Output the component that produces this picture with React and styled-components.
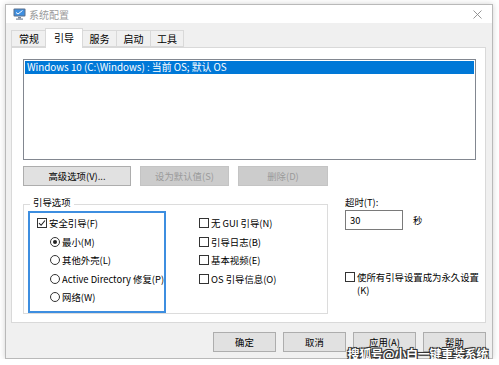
import React from "react";
import styled, { createGlobalStyle } from "styled-components";

const Global = createGlobalStyle`
  html, body { margin: 0; padding: 0; background: #ffffff; }
  body { font-family: "Noto Sans CJK SC", "Noto Sans", sans-serif; font-size: 9.4px; color: #000; }
  * { box-sizing: border-box; }
`;

const Window = styled.div`
  position: relative;
  margin: 4px 0 0 5px;
  width: 488px;
  height: 355px;
  border: 1px solid #b9b9b9;
  background: #f0f0f0;
  box-shadow: 0 0 6px rgba(0, 0, 0, 0.18);
  display: flex;
  flex-direction: column;
`;

const TitleBar = styled.div`
  height: 18px;
  background: #ffffff;
  display: flex;
  align-items: center;
  padding: 0 10px 0 7px;
  gap: 3px;
`;

const Title = styled.span`
  color: #9a9a9a;
  font-size: 10px;
  flex: 1;
`;

const Body = styled.div`
  flex: 1;
  display: flex;
  flex-direction: column;
  padding: 5px 6px 5px 5px;
`;

const TabRow = styled.div`
  height: 19px;
  display: flex;
  align-items: flex-end;
`;

const Tab = styled.div`
  width: ${(p) => p.$w}px;
  height: ${(p) => (p.$active ? 20 : 17)}px;
  margin: ${(p) => (p.$active ? "0 -1px -1px -1px" : "0")};
  position: relative;
  z-index: ${(p) => (p.$active ? 1 : 0)};
  background: ${(p) => (p.$active ? "#ffffff" : "#f0f0f0")};
  border: 1px solid #d9d9d9;
  border-bottom: ${(p) => (p.$active ? "none" : "1px solid #d9d9d9")};
  border-right: ${(p) => (p.$last || p.$active ? "1px solid #d9d9d9" : "none")};
  display: flex;
  align-items: center;
  justify-content: center;
  padding-bottom: ${(p) => (p.$active ? 3 : 0)}px;
  font-size: 10px;
`;

const Panel = styled.div`
  height: 276px;
  background: #ffffff;
  border: 1px solid #d9d9d9;
  padding: 11px 9px 0 11px;
  display: flex;
  flex-direction: column;
`;

const ListBox = styled.div`
  height: 101px;
  border: 1px solid #828790;
  padding: 1px;
`;

const ListItem = styled.div`
  height: 13px;
  background: #0078d7;
  color: #ffffff;
  padding-left: 2px;
  line-height: 13px;
  white-space: nowrap;
  font-size: 9.8px;
`;

const ButtonRow = styled.div`
  display: flex;
  gap: 9px;
  margin-top: 6px;
`;

const Button = styled.div`
  width: ${(p) => p.$w}px;
  height: 20px;
  flex: none;
  display: flex;
  align-items: center;
  justify-content: center;
  background: ${(p) => (p.$disabled ? "#cccccc" : "#e1e1e1")};
  border: 1px solid ${(p) => (p.$disabled ? "#c4c4c4" : "#adadad")};
  color: ${(p) => (p.$disabled ? "#9a9a9a" : "#000")};
  white-space: nowrap;
`;

const Lower = styled.div`
  display: flex;
  margin-top: 10px;
  gap: 17px;
`;

const Group = styled.fieldset`
  flex: none;
  width: 305px;
  min-width: 305px;
  margin: 0;
  padding: 0 0 0 4px;
  border: 1px solid #dcdcdc;
  display: flex;
  gap: 33px;
`;

const Legend = styled.legend`
  margin-left: 2px;
  padding: 0 3px 4px 3px;
  line-height: 12px;
`;

const Highlight = styled.div`
  width: 138px;
  height: 102px;
  margin-top: -1px;
  border: 2px solid #3d8ee0;
  padding: 1px 0 0 7px;
`;

const Column = styled.div`
  padding-top: 2px;
`;

const Row = styled.div`
  height: 18.5px;
  display: flex;
  align-items: center;
  gap: 2px;
  padding-left: ${(p) => p.$indent || 0}px;
  white-space: nowrap;
`;

const Box = styled.span`
  width: 10px;
  height: 10px;
  border: 1px solid #333;
  background: #fff;
  flex: none;
  display: flex;
  align-items: center;
  justify-content: center;
`;

const Radio = styled.span`
  width: 10px;
  height: 10px;
  border: 1px solid #333;
  border-radius: 50%;
  background: #fff;
  flex: none;
  display: flex;
  align-items: center;
  justify-content: center;
  &::after {
    content: "";
    display: ${(p) => (p.$on ? "block" : "none")};
    width: 4px;
    height: 4px;
    border-radius: 50%;
    background: #222;
  }
`;

const Side = styled.div`
  display: flex;
  flex-direction: column;
`;

const Label = styled.div`
  line-height: 12px;
`;

const InputRow = styled.div`
  display: flex;
  align-items: center;
  gap: 10px;
  margin-top: 2px;
`;

const Input = styled.div`
  width: 58px;
  height: 20px;
  border: 1px solid #7a7a7a;
  background: #fff;
  padding: 2px 0 0 4px;
  line-height: 14px;
`;

const PermRow = styled.div`
  display: flex;
  align-items: flex-start;
  gap: 2px;
  margin-top: 41px;
  line-height: 13px;
  white-space: nowrap;
  & > span:first-child { margin-top: 1px; }
`;

const Footer = styled.div`
  display: flex;
  justify-content: flex-end;
  gap: 7px;
  margin-top: 9px;
`;

const Watermark = styled.div`
  position: absolute;
  right: 4px;
  bottom: -4px;
  font-size: 12px;
  font-weight: 700;
  color: #ffffff;
  letter-spacing: -0.3px;
  text-shadow: -1px -1px 0 #333, 1px -1px 0 #333, -1px 1px 0 #333, 1px 1px 0 #333, 0 0 2px #000;
  white-space: nowrap;
`;

const Check = () => (
  <svg width="8" height="8" viewBox="0 0 8 8">
    <path d="M1 4.2 L3.1 6.3 L7 1.5" fill="none" stroke="#222" strokeWidth="1.1" />
  </svg>
);

const AppIcon = () => (
  <svg width="13" height="12" viewBox="0 0 13 12">
    <rect x="0.5" y="0.5" width="12" height="8" rx="1" fill="#5b6e8a" />
    <rect x="1.5" y="1.5" width="10" height="6" fill="#3f8fe0" />
    <path d="M3 4.5 L5 6 L9.5 2.5" fill="none" stroke="#fff" strokeWidth="1" />
    <rect x="5" y="9" width="3" height="1.5" fill="#7a8799" />
    <rect x="3" y="10.5" width="7" height="1.2" fill="#7a8799" />
  </svg>
);

const CloseIcon = () => (
  <svg width="9" height="9" viewBox="0 0 9 9">
    <path d="M0.5 0.5 L8.5 8.5 M8.5 0.5 L0.5 8.5" stroke="#8a8a8a" strokeWidth="0.9" />
  </svg>
);

const tabs = [
  { t: "常规", w: 35 },
  { t: "引导", w: 38, active: true },
  { t: "服务", w: 34 },
  { t: "启动", w: 34 },
  { t: "工具", w: 34, last: true },
];

export default function App() {
  return (
    <>
      <Global />
      <Window>
        <TitleBar>
          <AppIcon />
          <Title>系统配置</Title>
          <CloseIcon />
        </TitleBar>
        <Body>
          <TabRow>
            {tabs.map((t) => (
              <Tab key={t.t} $w={t.w} $active={t.active} $last={t.last}>
                {t.t}
              </Tab>
            ))}
          </TabRow>
          <Panel>
            <ListBox>
              <ListItem>Windows 10 (C:\Windows) : 当前 OS; 默认 OS</ListItem>
            </ListBox>
            <ButtonRow>
              <Button $w={108}>高级选项(V)...</Button>
              <Button $w={89} $disabled>设为默认值(S)</Button>
              <Button $w={90} $disabled>删除(D)</Button>
            </ButtonRow>
            <Lower>
              <Group>
                <Legend>引导选项</Legend>
                <Highlight>
                  <Row>
                    <Box><Check /></Box>安全引导(F)
                  </Row>
                  <Row $indent={13}>
                    <Radio $on />最小(M)
                  </Row>
                  <Row $indent={13}>
                    <Radio />其他外壳(L)
                  </Row>
                  <Row $indent={13}>
                    <Radio />Active Directory 修复(P)
                  </Row>
                  <Row $indent={13}>
                    <Radio />网络(W)
                  </Row>
                </Highlight>
                <Column>
                  <Row><Box />无 GUI 引导(N)</Row>
                  <Row><Box />引导日志(B)</Row>
                  <Row><Box />基本视频(E)</Row>
                  <Row><Box />OS 引导信息(O)</Row>
                </Column>
              </Group>
              <Side>
                <Label>超时(T):</Label>
                <InputRow>
                  <Input>30</Input>
                  <span>秒</span>
                </InputRow>
                <PermRow>
                  <Box />
                  <span>使所有引导设置成为永久设置<br />(K)</span>
                </PermRow>
              </Side>
            </Lower>
          </Panel>
          <Footer>
            <Button $w={63}>确定</Button>
            <Button $w={63}>取消</Button>
            <Button $w={63}>应用(A)</Button>
            <Button $w={63}>帮助</Button>
          </Footer>
        </Body>
        <Watermark>搜狐号@小白一键重装系统</Watermark>
      </Window>
    </>
  );
}
